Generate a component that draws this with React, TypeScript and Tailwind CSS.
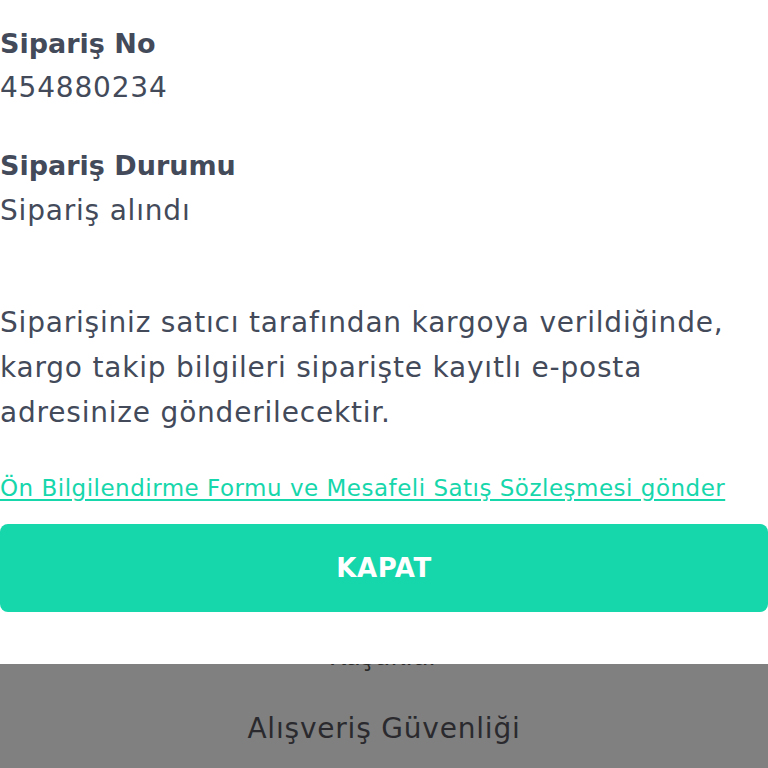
export default function App() {
  const font = { fontFamily: '"DejaVu Sans", "Noto Sans", sans-serif' };
  return (
    <div className="w-[768px] h-[768px] overflow-hidden flex flex-col bg-white" style={font}>
      <div className="h-[664px] bg-white flex flex-col shrink-0">
        <div className="pt-[22px] text-[#434a5a]">
          <div className="text-[27px] leading-[44px] font-bold">Sipariş No</div>
          <div className="text-[28px] leading-[44px] tracking-[0.8px]">454880234</div>
          <div className="h-[34px]" />
          <div className="text-[27px] leading-[44px] font-bold">Sipariş Durumu</div>
          <div className="text-[28px] leading-[45px] tracking-[0.8px]">Sipariş alındı</div>
          <div className="h-[67px]" />
          <p className="text-[28px] leading-[45px] tracking-[0.8px]">
            Siparişiniz satıcı tarafından kargoya verildiğinde,
            <br />
            kargo takip bilgileri siparişte kayıtlı e-posta
            <br />
            adresinize gönderilecektir.
          </p>
        </div>
        <a className="mt-[38px] block text-[23px] leading-[30px] tracking-[0.5px] text-[#16d6ab] underline underline-offset-[3px]">
          Ön Bilgilendirme Formu ve Mesafeli Satış Sözleşmesi gönder
        </a>
        <button className="mt-[21px] h-[88px] w-full rounded-[8px] bg-[#16d6ab] text-white text-[26px] font-bold tracking-[0.5px]">
          KAPAT
        </button>
      </div>
      <div className="flex-1 bg-[#808080] overflow-hidden flex flex-col items-center">
        <div className="-mt-[28px] text-[26px] leading-[40px] text-[#2a2a2a]">Kuşaklar</div>
        <div className="mt-[33px] text-[28px] leading-[40px] tracking-[0.8px] text-[#2a2a2e]">Alışveriş Güvenliği</div>
      </div>
    </div>
  );
}
